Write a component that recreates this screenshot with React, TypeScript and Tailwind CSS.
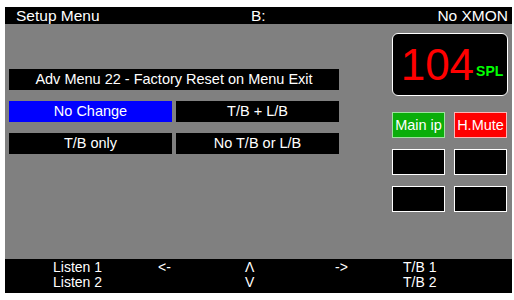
const SideBox = ({ label, tone }: { label?: string; tone: "green" | "red" | "black" }) => {
  const toneClass =
    tone === "green"
      ? "bg-[#0aae0a] border-[#9ee29e]"
      : tone === "red"
        ? "bg-[#ff0000] border-[#ffb4b4]"
        : "bg-black border-white";
  return (
    <div
      className={`w-[53px] h-[26px] border flex items-center justify-center text-white text-[14.5px] leading-none whitespace-nowrap ${toneClass}`}
    >
      {label}
    </div>
  );
};

const MenuButton = ({ label, active }: { label: string; active?: boolean }) => (
  <div
    className={`w-[163px] h-[21px] flex items-center justify-center text-white text-[14.5px] ${
      active ? "bg-[#0000ff]" : "bg-black"
    }`}
  >
    {label}
  </div>
);

export default function App() {
  return (
    <div className="w-[514px] h-[300px] bg-white font-['Liberation_Sans',Arial,sans-serif]">
      <div className="ml-[5px] pt-[7px] w-[507px]">
        {/* header */}
        <div className="h-[17px] bg-black text-white text-[15.5px] leading-[17px] flex">
          <div className="w-[246px] pl-[11px]">Setup Menu</div>
          <div>B:</div>
          <div className="flex-1 text-right pr-[4px]">No XMON</div>
        </div>

        {/* main area */}
        <div className="h-[235px] bg-[#808080] flex">
          <div className="pl-[4px] pt-[45px] w-[334px]">
            <div className="w-[330px] h-[21px] bg-black text-white text-[14.5px] flex items-center justify-center">
              Adv Menu 22 - Factory Reset on Menu Exit
            </div>
            <div className="mt-[11px] flex gap-[4px]">
              <MenuButton label="No Change" active />
              <MenuButton label="T/B + L/B" />
            </div>
            <div className="mt-[11px] flex gap-[4px]">
              <MenuButton label="T/B only" />
              <MenuButton label="No T/B or L/B" />
            </div>
          </div>

          <div className="ml-[53px] pt-[9px]">
            <div className="w-[116px] h-[63px] bg-black border border-white rounded-[6px] flex items-center justify-center pl-[4px]">
              <span className="text-[#ff0000] text-[44px] leading-none">104</span>
              <span className="text-[#00ff00] text-[14px] font-bold self-end mb-[13px] ml-[2px]">SPL</span>
            </div>
            <div className="mt-[16px] flex gap-[9px]">
              <SideBox label="Main ip" tone="green" />
              <SideBox label="H.Mute" tone="red" />
            </div>
            <div className="mt-[11px] flex gap-[9px]">
              <SideBox tone="black" />
              <SideBox tone="black" />
            </div>
            <div className="mt-[11px] flex gap-[9px]">
              <SideBox tone="black" />
              <SideBox tone="black" />
            </div>
          </div>
        </div>

        {/* soft key legend */}
        <div className="h-[34px] bg-black text-white text-[14px] leading-[15px] pt-[1px] pl-[48px] grid grid-cols-[105px_87px_90px_68px_1fr]">
          <div>
            <div>Listen 1</div>
            <div>Listen 2</div>
          </div>
          <div>
            <div>&lt;-</div>
          </div>
          <div>
            <div>Λ</div>
            <div>V</div>
          </div>
          <div>
            <div>-&gt;</div>
          </div>
          <div>
            <div>T/B 1</div>
            <div>T/B 2</div>
          </div>
        </div>
      </div>
    </div>
  );
}
